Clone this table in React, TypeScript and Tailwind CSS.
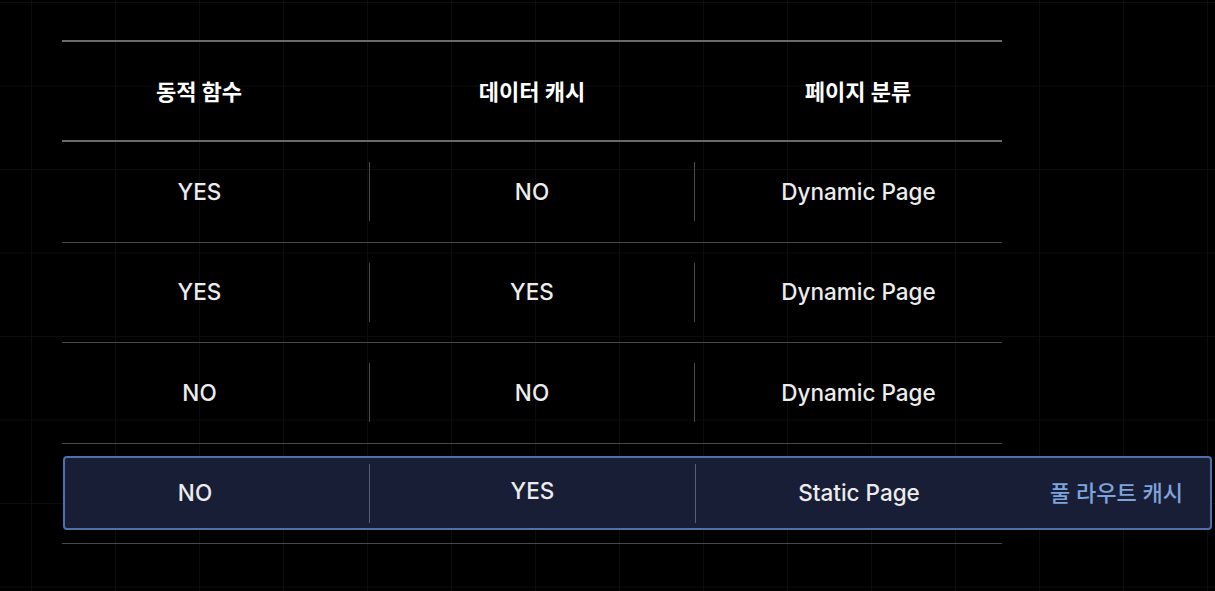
const rows = [
  { fn: "YES", cache: "NO", page: "Dynamic Page" },
  { fn: "YES", cache: "YES", page: "Dynamic Page" },
  { fn: "NO", cache: "NO", page: "Dynamic Page" },
];

const font = { fontFamily: '"Inter", "Noto Sans CJK KR", sans-serif' };

function Divider({ className = "" }: { className?: string }) {
  return <div className={`w-px h-[59px] bg-[#4a4a4a] ${className}`} />;
}

export default function App() {
  return (
    <div
      className="w-[1215px] h-[591px] overflow-hidden bg-black bg-[linear-gradient(to_right,#0d0d0d_1px,transparent_1px),linear-gradient(to_bottom,#0d0d0d_1px,transparent_1px)] bg-[size:84px_83.5px] bg-[position:31px_2px] pl-[62px] pt-[40px] text-[#ececec]"
      style={font}
    >
      {/* Header */}
      <div className="w-[940px] h-[2px] bg-[#6a6a6a]" />
      <div className="w-[940px] h-[98px] grid grid-cols-[307px_326px_307px] items-center text-[22px] font-bold text-white">
        <div className="text-center pr-[33px] pt-[2px]">동적 함수</div>
        <div className="text-center pt-[2px]">데이터 캐시</div>
        <div className="text-center pl-[19px] pt-[2px]">페이지 분류</div>
      </div>
      <div className="w-[940px] h-[2px] bg-[#6a6a6a]" />

      {/* Rows */}
      {rows.map((r, i) => (
        <div key={i}>
          <div className="w-[940px] h-[99.5px] grid grid-cols-[307px_326px_307px] items-center text-[22.5px] font-medium">
            <div className="text-center pr-[32px]">{r.fn}</div>
            <div className="flex items-center">
              <Divider />
              <div className="flex-1 text-center">{r.cache}</div>
              <Divider />
            </div>
            <div className="text-center pl-[20px]">{r.page}</div>
          </div>
          <div className="w-[940px] h-px bg-[#4a4a4a]" />
        </div>
      ))}

      {/* Highlighted row */}
      <div className="h-[99px] flex items-center">
        <div className="w-[1149px] h-[74px] ml-[1px] rounded-[4px] border-2 border-[#4f71ab] bg-[#191e37] flex items-center text-[22.5px] font-medium">
          <div className="w-[304px] text-center pr-[44px]">NO</div>
          <Divider className="bg-[#5a5f78] h-[58px]" />
          <div className="w-[325px] text-center pb-[4px]">YES</div>
          <Divider className="bg-[#5a5f78] h-[58px]" />
          <div className="w-[307px] text-center pl-[19px]">Static Page</div>
          <div className="flex-1 text-center pl-[20px] text-[22px] text-[#7fa3dc]">
            풀 라우트 캐시
          </div>
        </div>
      </div>
      <div className="w-[940px] h-px bg-[#4a4a4a]" />
    </div>
  );
}
